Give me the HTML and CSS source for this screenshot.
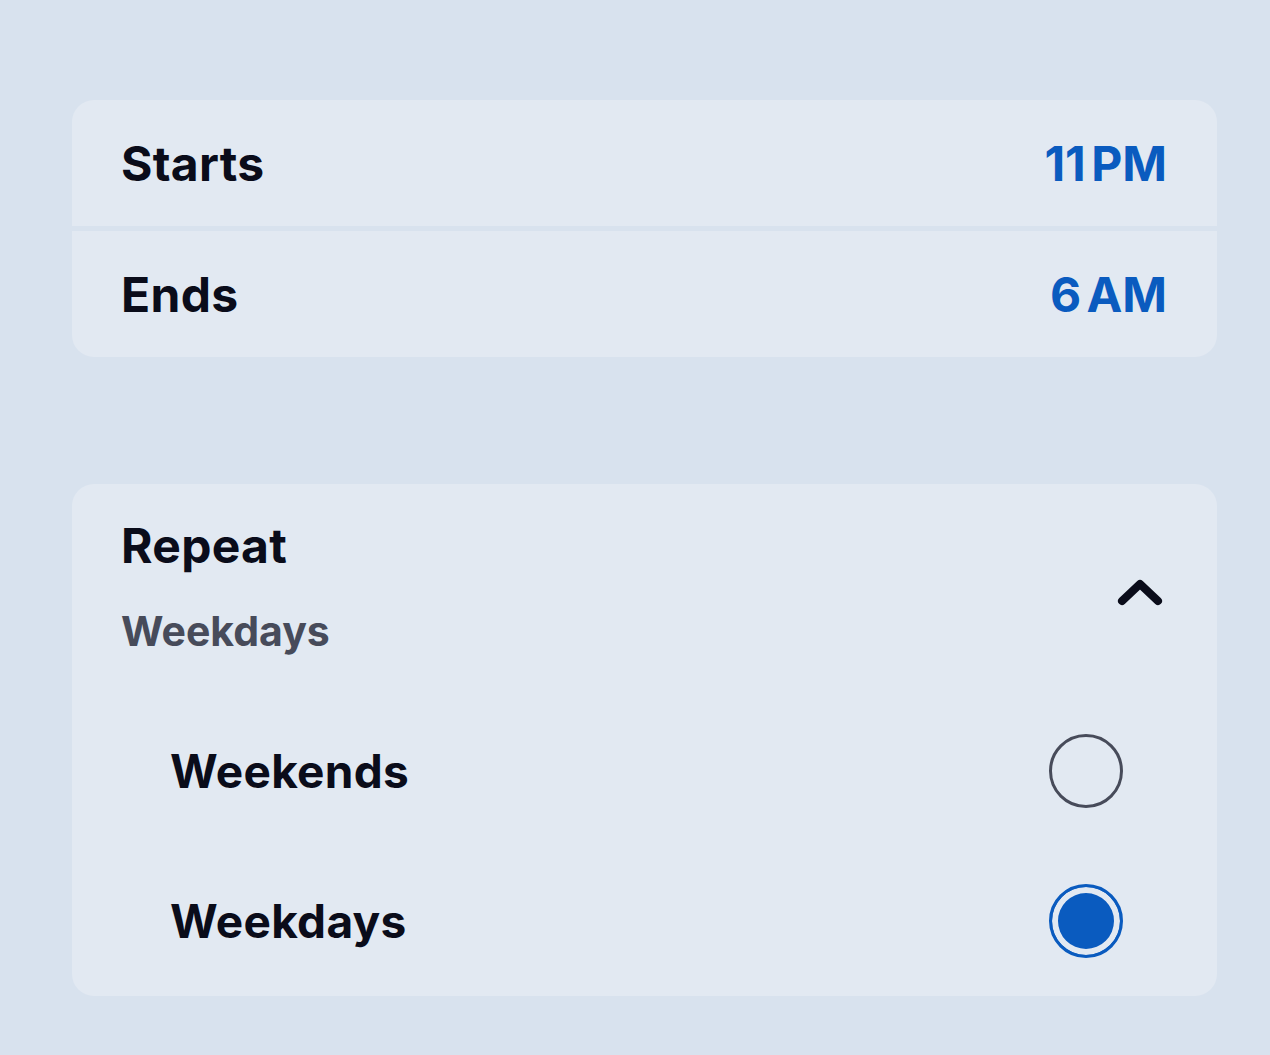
FILE: index.html
```html
<!DOCTYPE html>
<html lang="en">
<head>
    <meta charset="UTF-8">
    <title>Schedule</title>
    <link rel="stylesheet" href="styles.css">
</head>
<body>
    <div class="page">
        <div class="card times">
            <div class="row">
                <span class="label">Starts</span>
                <span class="value">11 PM</span>
            </div>
            <div class="row">
                <span class="label">Ends</span>
                <span class="value">6 AM</span>
            </div>
        </div>

        <div class="card repeat">
            <div class="repeat-head">
                <div class="repeat-text">
                    <div class="label">Repeat</div>
                    <div class="sub">Weekdays</div>
                </div>
                <svg class="chevron" width="46" height="30" viewBox="0 0 46 30">
                    <path d="M5 24 L23 7 L41 24" fill="none" stroke="#0a0c1a" stroke-width="8" stroke-linecap="round" stroke-linejoin="round"/>
                </svg>
            </div>
            <div class="option">
                <span class="label">Weekends</span>
                <span class="radio"></span>
            </div>
            <div class="option">
                <span class="label">Weekdays</span>
                <span class="radio checked"></span>
            </div>
        </div>
    </div>
</body>
</html>
```

FILE: styles.css
```css
body {
    margin: 0;
    background: #d8e2ee;
    font-family: Inter, "Noto Sans", sans-serif;
    color: #0a0c1a;
}

.page {
    padding: 100px 53px 60px 72px;
}

.card {
    background: #e2e9f2;
    border-radius: 22px;
    overflow: hidden;
}

.times {
    display: flex;
    flex-direction: column;
    gap: 5px;
    background: #d8e2ee;
}

.row {
    display: flex;
    justify-content: space-between;
    align-items: center;
    height: 126px;
    padding: 0 50px 0 49px;
    background: #e2e9f2;
}

.label {
    font-size: 48px;
    font-weight: 700;
    letter-spacing: 0.3px;
}

.value {
    font-size: 48px;
    font-weight: 700;
    color: #0a5bbf;
    word-spacing: -6px;
}

.repeat {
    margin-top: 127px;
}

.repeat-head {
    display: flex;
    justify-content: space-between;
    align-items: center;
    padding: 32px 54px 40px 49px;
}

.repeat-text {
    display: flex;
    flex-direction: column;
    gap: 31px;
}

.chevron {
    margin-top: 11px;
}

.sub {
    font-size: 41px;
    font-weight: 700;
    color: #474b5a;
}

.option {
    display: flex;
    justify-content: space-between;
    align-items: center;
    height: 150px;
    padding: 0 94px 0 98px;
}

.option .label {
    font-size: 46px;
}

.radio {
    width: 68px;
    height: 68px;
    border: 3px solid #474b5a;
    border-radius: 50%;
}

.radio.checked {
    border-color: #0a5bbf;
    background: #0a5bbf;
    box-shadow: inset 0 0 0 6px #e2e9f2;
}
```
